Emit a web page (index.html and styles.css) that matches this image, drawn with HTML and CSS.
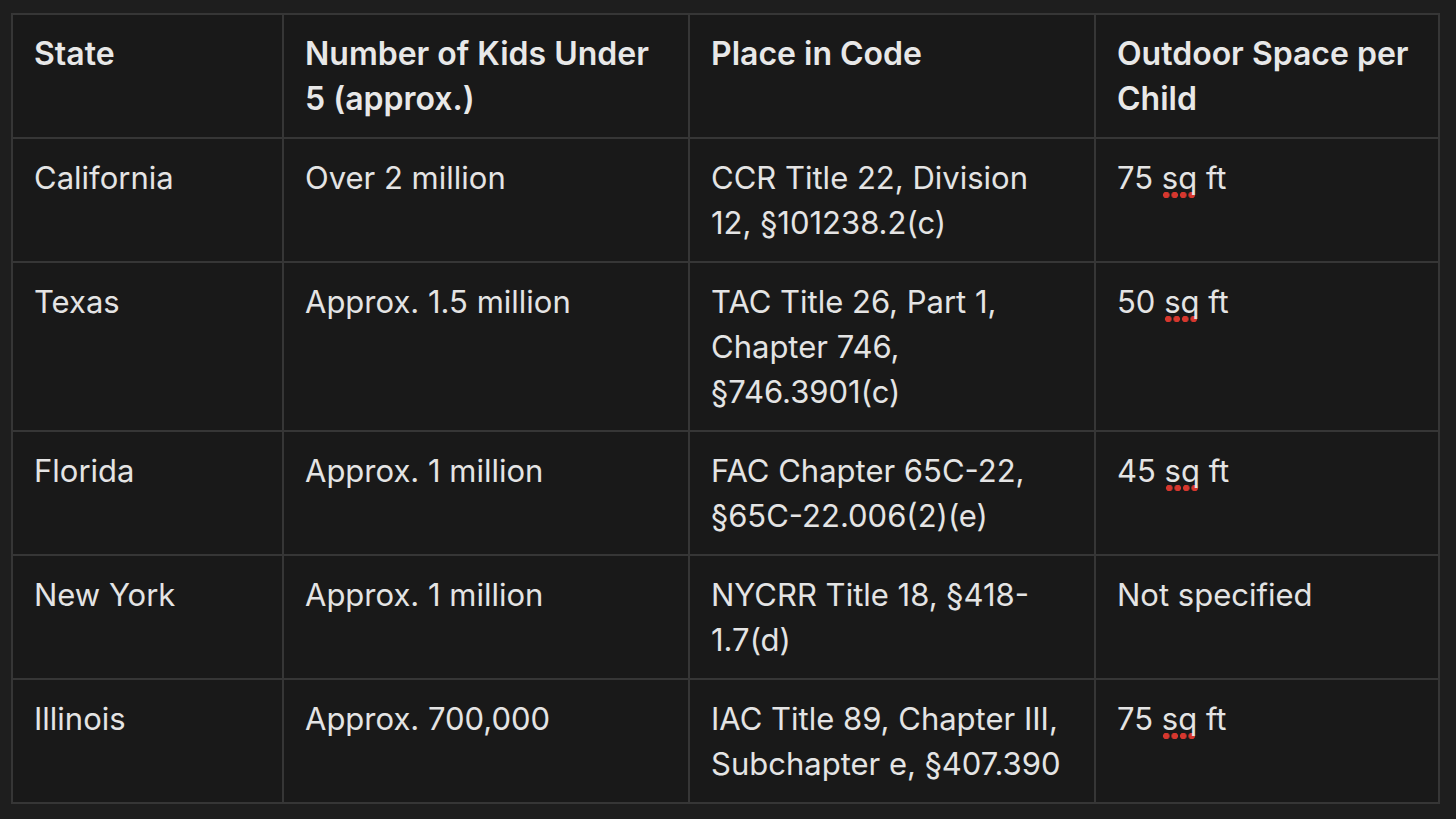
FILE: index.html
```html
<!DOCTYPE html>
<html lang="en">
<head>
  <meta charset="UTF-8">
  <meta name="viewport" content="width=device-width, initial-scale=1.0">
  <title>Outdoor Space per Child</title>
  <link rel="stylesheet" href="styles.css">
</head>
<body>
  <table class="tabela">
    <colgroup>
      <col class="c1">
      <col class="c2">
      <col class="c3">
      <col class="c4">
    </colgroup>
    <thead>
      <tr>
        <th>State</th>
        <th>Number of Kids Under 5 (approx.)</th>
        <th>Place in Code</th>
        <th>Outdoor Space per Child</th>
      </tr>
    </thead>
    <tbody>
      <tr>
        <td>California</td>
        <td>Over 2 million</td>
        <td>CCR Title 22, Division 12, §101238.2(c)</td>
        <td>75 <span class="erro">sq</span> ft</td>
      </tr>
      <tr>
        <td>Texas</td>
        <td>Approx. 1.5 million</td>
        <td>TAC Title 26, Part 1, Chapter 746, §746.3901(c)</td>
        <td>50 <span class="erro">sq</span> ft</td>
      </tr>
      <tr>
        <td>Florida</td>
        <td>Approx. 1 million</td>
        <td>FAC Chapter 65C-22, §65C-22.006(2)(e)</td>
        <td>45 <span class="erro">sq</span> ft</td>
      </tr>
      <tr>
        <td>New York</td>
        <td>Approx. 1 million</td>
        <td>NYCRR Title 18, §418-1.7(d)</td>
        <td>Not specified</td>
      </tr>
      <tr>
        <td>Illinois</td>
        <td>Approx. 700,000</td>
        <td>IAC Title 89, Chapter III, Subchapter e, §407.390</td>
        <td>75 <span class="erro">sq</span> ft</td>
      </tr>
    </tbody>
  </table>
</body>
</html>
```

FILE: styles.css
```css
body {
  margin: 0;
  padding: 13px 16px 0 11px;
  background: #1e1e1e;
  font-family: Inter, "Liberation Sans", sans-serif;
  color: #e4e4e4;
}

.tabela {
  width: 1429px;
  border-collapse: collapse;
  table-layout: fixed;
  background: #191919;
  font-size: 31px;
  line-height: 45px;
}

.c1 { width: 271px; }
.c2 { width: 406px; }
.c3 { width: 406px; }
.c4 { width: 344px; }

.tabela th,
.tabela td {
  border: 2px solid #363636;
  padding: 16px 21px 16px 21px;
  text-align: left;
  vertical-align: top;
}

.tabela th {
  font-size: 32px;
  font-weight: 600;
  color: #e8e8e8;
}

.tabela td {
  font-weight: 400;
}

.erro {
  padding-bottom: 3px;
  background-image: radial-gradient(circle, #d6372e 3px, transparent 3.5px);
  background-size: 8.5px 8px;
  background-repeat: repeat-x;
  background-position: 0 100%;
}
```
